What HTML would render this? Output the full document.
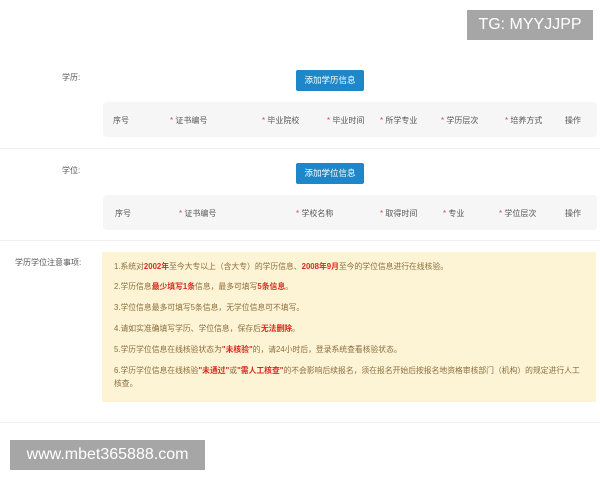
<html><head><style>
body{margin:0;width:600px;height:480px;background:#fff;font-family:"Liberation Sans","Noto Sans CJK SC",sans-serif;position:relative;overflow:hidden;color:#555}
.a{position:absolute;white-space:nowrap}
.lbl{font-size:8px;color:#555}
.btn{background:#1d87c9;color:#fff;font-size:8.5px;text-align:center;line-height:21px;border-radius:2px;width:68px;height:21px}
.tbl{background:#f6f6f6;border-radius:4px;left:103px;width:494px;height:35px}
.h{font-size:8px;color:#555}
.s{color:#e0464a}
.sep{height:1px;background:#f0f0f0;left:0;width:600px}
.note{left:102px;top:252px;width:494px;height:150px;background:#fdf4d6}
.n{font-size:7.8px;color:#8a6d3b;left:114px}
.r{color:#d62a1f;font-weight:bold}
.wm{background:#a6a6a6;color:#fff;font-size:16px;text-align:center}
</style></head><body>
<div class="a wm" style="left:467px;top:10px;width:126px;height:30px;line-height:30px">TG: MYYJJPP</div>
<div class="a lbl" style="left:62px;top:72px">学历:</div>
<div class="a btn" style="left:296px;top:70px">添加学历信息</div>
<div class="a tbl" style="top:102px"></div>
<div class="a h" style="left:113px;top:115px">序号</div>
<div class="a h" style="left:170px;top:115px"><span class="s">*</span> 证书编号</div>
<div class="a h" style="left:262px;top:115px"><span class="s">*</span> 毕业院校</div>
<div class="a h" style="left:327px;top:115px"><span class="s">*</span> 毕业时间</div>
<div class="a h" style="left:380px;top:115px"><span class="s">*</span> 所学专业</div>
<div class="a h" style="left:441px;top:115px"><span class="s">*</span> 学历层次</div>
<div class="a h" style="left:505px;top:115px"><span class="s">*</span> 培养方式</div>
<div class="a h" style="left:565px;top:115px">操作</div>
<div class="a sep" style="top:148px"></div>
<div class="a lbl" style="left:62px;top:165px">学位:</div>
<div class="a btn" style="left:296px;top:163px">添加学位信息</div>
<div class="a tbl" style="top:195px"></div>
<div class="a h" style="left:115px;top:208px">序号</div>
<div class="a h" style="left:179px;top:208px"><span class="s">*</span> 证书编号</div>
<div class="a h" style="left:296px;top:208px"><span class="s">*</span> 学校名称</div>
<div class="a h" style="left:380px;top:208px"><span class="s">*</span> 取得时间</div>
<div class="a h" style="left:443px;top:208px"><span class="s">*</span> 专业</div>
<div class="a h" style="left:499px;top:208px"><span class="s">*</span> 学位层次</div>
<div class="a h" style="left:565px;top:208px">操作</div>
<div class="a sep" style="top:240px"></div>
<div class="a lbl" style="left:15px;top:257px">学历学位注意事项:</div>
<div class="a note"></div>
<div class="a n" style="top:261px">1.系统对<span class="r">2002年</span>至今大专以上（含大专）的学历信息、<span class="r">2008年9月</span>至今的学位信息进行在线核验。</div>
<div class="a n" style="top:281px">2.学历信息<span class="r">最少填写1条</span>信息，最多可填写<span class="r">5条信息</span>。</div>
<div class="a n" style="top:302px">3.学位信息最多可填写5条信息，无学位信息可不填写。</div>
<div class="a n" style="top:323px">4.请如实准确填写学历、学位信息，保存后<span class="r">无法删除</span>。</div>
<div class="a n" style="top:344px">5.学历学位信息在线核验状态为<span class="r">"未核验"</span>的，请24小时后，登录系统查看核验状态。</div>
<div class="a n" style="top:365px">6.学历学位信息在线核验<span class="r">"未通过"</span>或<span class="r">"需人工核查"</span>的不会影响后续报名，须在报名开始后按报名地资格审核部门（机构）的规定进行人工</div>
<div class="a n" style="top:378px">核查。</div>
<div class="a sep" style="top:422px"></div>
<div class="a wm" style="left:10px;top:440px;width:195px;height:30px;line-height:30px">www.mbet365888.com</div>
</body></html>
